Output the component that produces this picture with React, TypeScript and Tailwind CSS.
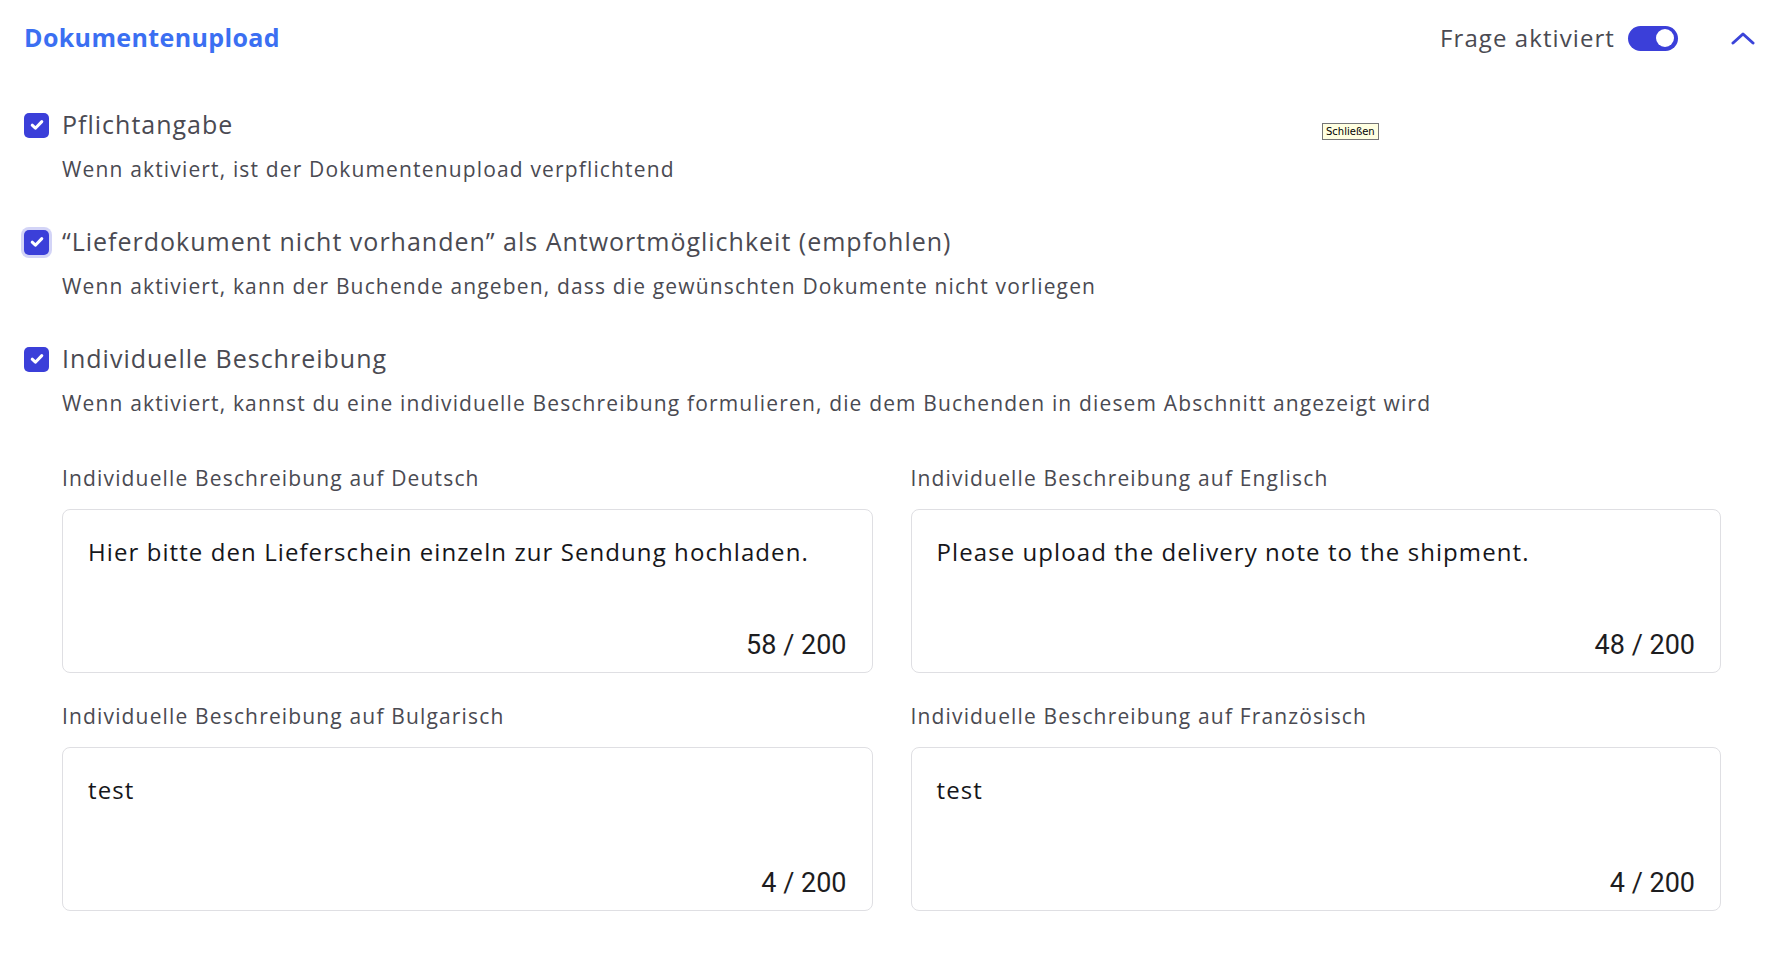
import React from "react";

const font = { fontFamily: '"Open Sans", "Noto Sans", sans-serif' };

function Check({ focused }: { focused?: boolean }) {
  return (
    <div
      className={
        "w-[25px] h-[25px] shrink-0 rounded-[5px] bg-[#3b3fd9] flex items-center justify-center " +
        (focused ? "ring-[3px] ring-[#d3d4f7]" : "")
      }
    >
      <svg width="14" height="12" viewBox="0 0 14 12" fill="none">
        <path d="M2.2 6.2 L5.4 9.2 L11.8 2.6" stroke="white" strokeWidth="3" strokeLinecap="round" strokeLinejoin="round" />
      </svg>
    </div>
  );
}

function Option({ label, desc, focused }: { label: string; desc: string; focused?: boolean }) {
  return (
    <div className="flex flex-col">
      <div className="flex items-center gap-[13px] h-[34px]">
        <Check focused={focused} />
        <span className="text-[25px] text-[#4a4a52] tracking-[0.04em]">{label}</span>
      </div>
      <div className="pl-[38px] mt-[13px] h-[30px] flex items-center text-[21px] text-[#4a4a52] tracking-[0.055em]">
        {desc}
      </div>
    </div>
  );
}

function Field({ label, value, count }: { label: string; value: string; count: string }) {
  return (
    <div className="flex flex-col">
      <div className="h-[30px] flex items-center text-[21px] text-[#4a4a52] tracking-[0.055em]">{label}</div>
      <div className="mt-[15px] h-[164px] rounded-[8px] border border-[#dfdfe3] bg-white pl-[25px] pr-[25px] pt-[26px] pb-[10px] flex flex-col justify-between">
        <div className="text-[24px] text-[#16161a] tracking-[0.045em] leading-[32px]">{value}</div>
        <div className="self-end text-[27px] text-[#1d1d1f] leading-[34px]" style={{ fontFamily: "Roboto, sans-serif" }}>
          {count}
        </div>
      </div>
    </div>
  );
}

export default function App() {
  return (
    <div className="relative w-[1768px] h-[963px] bg-white pl-[24px] pr-[12px]" style={font}>
      <div className="h-[76px] flex items-center justify-between">
        <span className="text-[25px] font-bold text-[#3b6ff2] tracking-[0.015em]">Dokumentenupload</span>
        <div className="flex items-center">
          <span className="text-[24px] text-[#4a4a52] tracking-[0.045em]">Frage aktiviert</span>
          <div className="ml-[13px] w-[50px] h-[25px] rounded-full bg-[#3b3fd9] flex items-center justify-end pr-[4px]">
            <div className="w-[18px] h-[18px] rounded-full bg-white" />
          </div>
          <div className="ml-[52px] w-[26px] h-[26px] flex items-center justify-center">
            <svg width="24" height="14" viewBox="0 0 24 14" fill="none">
              <path d="M2 12 L12 3 L22 12" stroke="#3b44d9" strokeWidth="3" strokeLinecap="round" strokeLinejoin="round" />
            </svg>
          </div>
        </div>
      </div>

      <div
        className="absolute left-[1322px] top-[123px] h-[17px] px-[3px] border border-[#767676] bg-[#ffffe1] text-[10px] leading-[15px] text-black"
        style={{ fontFamily: '"DejaVu Sans", sans-serif' }}
      >
        Schließen
      </div>

      <div className="flex flex-col gap-[40px] mt-[32px]">
        <Option label="Pflichtangabe" desc="Wenn aktiviert, ist der Dokumentenupload verpflichtend" />
        <Option
          focused
          label="“Lieferdokument nicht vorhanden” als Antwortmöglichkeit (empfohlen)"
          desc="Wenn aktiviert, kann der Buchende angeben, dass die gewünschten Dokumente nicht vorliegen"
        />
        <Option
          label="Individuelle Beschreibung"
          desc="Wenn aktiviert, kannst du eine individuelle Beschreibung formulieren, die dem Buchenden in diesem Abschnitt angezeigt wird"
        />
      </div>

      <div className="pl-[38px] pr-[35px] mt-[45px] grid grid-cols-2 gap-x-[38px] gap-y-[29px]">
        <Field label="Individuelle Beschreibung auf Deutsch" value="Hier bitte den Lieferschein einzeln zur Sendung hochladen." count="58 / 200" />
        <Field label="Individuelle Beschreibung auf Englisch" value="Please upload the delivery note to the shipment." count="48 / 200" />
        <Field label="Individuelle Beschreibung auf Bulgarisch" value="test" count="4 / 200" />
        <Field label="Individuelle Beschreibung auf Französisch" value="test" count="4 / 200" />
      </div>
    </div>
  );
}
